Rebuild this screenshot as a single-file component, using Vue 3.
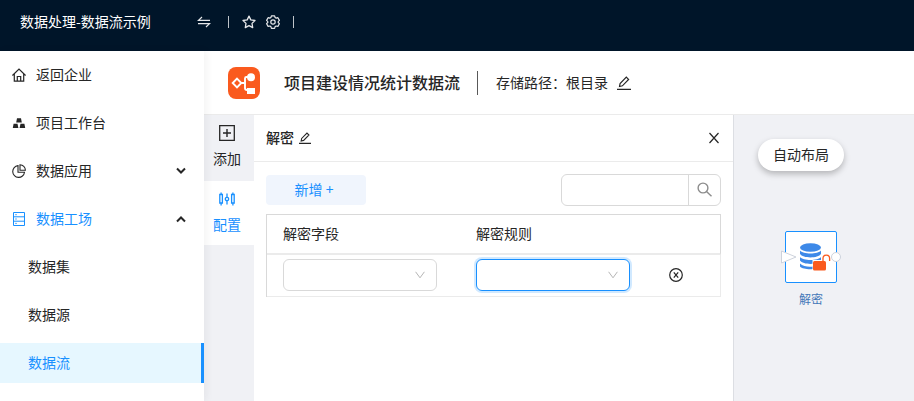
<script setup>
import { ref } from 'vue'

const menu = [
  { label: '返回企业', icon: 'home' },
  { label: '项目工作台', icon: 'bench' },
  { label: '数据应用', icon: 'pie', arrow: 'down' },
  { label: '数据工场', icon: 'server', arrow: 'up', open: true },
  { label: '数据集', child: true },
  { label: '数据源', child: true },
  { label: '数据流', child: true, active: true },
]
const keyword = ref('')
const field = ref('')
const rule = ref('')
</script>

<template>
  <div class="app">
    <header class="topbar">
      <span class="brand">数据处理-数据流示例</span>
      <button class="icon-btn swap" aria-label="切换">
        <svg width="14" height="14" viewBox="0 0 14 14" fill="none" stroke="currentColor" stroke-width="1.2">
          <path d="M13 5.3H1.5L5 2M1 8.7h11.5L9 12" />
        </svg>
      </button>
      <i class="bar"></i>
      <button class="icon-btn star" aria-label="收藏">
        <svg width="14" height="14" viewBox="0 0 14 14" fill="none" stroke="currentColor" stroke-width="1.3" stroke-linejoin="round">
          <path d="M7 1.1l1.800 3.800 4.200.6-3 2.900.7 4.200L7 10.600l-3.700 2 .7-4.200-3-2.900 4.200-.6z" />
        </svg>
      </button>
      <button class="icon-btn gear" aria-label="设置">
        <svg width="14" height="14" viewBox="0 0 14 14" fill="none" stroke="currentColor" stroke-width="1.2" stroke-linejoin="round">
          <path d="M5.400.8h3.200l.5 1.700 1.100.6 1.700-.4 1.500 2.700L12.200 6.600v.9l1.200 1.200-1.500 2.700-1.700-.4-1.100.6-.5 1.700H5.400l-.5-1.700-1.100-.6-1.700.4L.6 8.700l1.200-1.200v-.9L.6 5.400l1.500-2.700 1.700.4 1.100-.6z" />
          <circle cx="7" cy="7" r="2.200" />
        </svg>
      </button>
      <i class="bar"></i>
    </header>

    <div class="body">
      <nav class="side">
        <a
          v-for="m in menu"
          :key="m.label"
          href="#"
          class="item"
          :class="{ child: m.child, active: m.active, open: m.open }"
        >
          <svg v-if="m.icon === 'home'" class="ico" viewBox="0 0 14 14" fill="none" stroke="currentColor" stroke-width="1.200">
            <path d="M.4 7.500L7 1l6.600 6.500M2.300 6v7.200h9.400V6M5.300 13V8.500h3.400V13" />
          </svg>
          <svg v-else-if="m.icon === 'bench'" class="ico" viewBox="0 0 14 14" fill="currentColor">
            <path d="M5 2.300h4l.8 4.200H4.200zM1.600 7.700h3.900l.9 4.300H.8zM8.500 7.700h3.900l.8 4.300H7.600z" />
          </svg>
          <svg v-else-if="m.icon === 'pie'" class="ico" viewBox="0 0 14 14" fill="none" stroke="currentColor" stroke-width="1.100">
            <path d="M6 1.600a5.900 5.900 0 1 0 6.500 6.600H6zM8 .7v5.500h5.400A5.600 5.600 0 0 0 8 .7z" />
          </svg>
          <svg v-else-if="m.icon === 'server'" class="ico" viewBox="0 0 14 14" fill="none" stroke="currentColor">
            <path d="M1.500.5h11v13h-11zM1.500 4.800h11M1.500 9.200h11M3.300 2.700h1.400M3.300 7h1.400M3.300 11.400h1.400" />
          </svg>
          <span class="text">{{ m.label }}</span>
          <svg v-if="m.arrow" class="arrow" width="10" height="8" viewBox="0 0 10 8" fill="none" stroke="currentColor" stroke-width="2">
            <path :d="m.arrow === 'down' ? 'M1 1.500l4 4 4-4' : 'M1 6.500l4-4 4 4'" />
          </svg>
        </a>
      </nav>

      <main class="main">
        <div class="head">
          <svg class="logo" width="32" height="32" viewBox="0 0 32 32">
            <rect width="32" height="32" rx="8" fill="#fa5a1e" />
            <path d="M9 11.700l4.300 4.300L9 20.300 4.700 16zM13.500 16h3.500M22 10h-3.500a1.500 1.500 0 0 0-1.500 1.500v9.500a2 2 0 0 0 2 2h2" fill="none" stroke="#fff" stroke-width="1.900" />
            <circle cx="23" cy="10.200" r="4" fill="#fff" />
            <rect x="19" y="21" width="8" height="6" fill="#fff" />
          </svg>
          <h1>项目建设情况统计数据流</h1>
          <i class="split"></i>
          <span class="path">存储路径：根目录</span>
          <button class="icon-btn" aria-label="编辑路径">
            <svg width="14" height="14" viewBox="0 0 14 14" fill="none" stroke="currentColor" stroke-width="1.200">
              <path d="M0 13.400h14M2.500 10.500l.6-3L9.300 1.200l2.300 2.300-6.200 6.300z" />
            </svg>
          </button>
        </div>

        <div class="work">
          <div class="rail">
            <button class="tool">
              <svg width="16" height="16" viewBox="0 0 16 16" fill="none" stroke="currentColor">
                <path d="M.7.7h14.600v14.600H.7z" stroke-width="1.300" />
                <path d="M4 8h8M8 4v8" stroke-width="1.400" />
              </svg>
              <span>添加</span>
            </button>
            <button class="tool on">
              <svg width="16" height="16" viewBox="0 0 16 16" fill="none" stroke="currentColor" stroke-width="1.300">
                <path d="M.8 3.500h2.600v8.500H.8zM2.100 1.500v2M2.100 12v2.500M12.600 3.500h2.600v8.500h-2.600zM13.900 1.500v2M13.900 12v2.500M8 2.500v3.500M8 10v3.500" />
                <circle cx="8" cy="8" r="1.700" />
              </svg>
              <span>配置</span>
            </button>
          </div>

          <section class="panel">
            <div class="panel-head">
              <h2>解密</h2>
              <button class="icon-btn" aria-label="编辑名称">
                <svg width="12" height="12" viewBox="0 0 14 14" fill="none" stroke="currentColor" stroke-width="1.300">
                  <path d="M0 13.300h14M2.500 10.500l.6-3L9.300 1.200l2.300 2.300-6.200 6.300z" />
                </svg>
              </button>
              <button class="icon-btn close" aria-label="关闭">
                <svg width="12" height="12" viewBox="0 0 12 12" fill="none" stroke="currentColor" stroke-width="1.200">
                  <path d="M1.500 1l9 10M10.500 1l-9 10" />
                </svg>
              </button>
            </div>

            <div class="panel-body">
              <div class="actions">
                <button class="add">新增 +</button>
                <div class="search">
                  <input v-model="keyword" type="text" aria-label="搜索" />
                  <button aria-label="查询">
                    <svg width="16" height="16" viewBox="0 0 16 16" fill="none" stroke="currentColor" stroke-width="1.400">
                      <circle cx="6" cy="6" r="4.900" />
                      <path d="M9.500 9.500l5 4.800" />
                    </svg>
                  </button>
                </div>
              </div>

              <table>
                <thead>
                  <tr>
                    <th>解密字段</th>
                    <th>解密规则</th>
                    <th class="op"></th>
                  </tr>
                </thead>
                <tbody>
                  <tr>
                    <td>
                      <label class="pick">
                        <select v-model="field" aria-label="解密字段"><option value=""></option></select>
                        <svg width="10" height="8" viewBox="0 0 10 8" fill="none" stroke="currentColor"><path d="M.6.8L5 6.800 9.400.8" /></svg>
                      </label>
                    </td>
                    <td>
                      <label class="pick focus">
                        <select v-model="rule" aria-label="解密规则"><option value=""></option></select>
                        <svg width="10" height="8" viewBox="0 0 10 8" fill="none" stroke="currentColor"><path d="M.6.8L5 6.800 9.400.8" /></svg>
                      </label>
                    </td>
                    <td class="op">
                      <button class="icon-btn" aria-label="删除">
                        <svg width="14" height="14" viewBox="0 0 14 14" fill="none" stroke="currentColor" stroke-width="1.200">
                          <circle cx="7" cy="7" r="6.300" />
                          <path d="M4.800 4.400l4.400 5.200M9.200 4.400L4.800 9.600" />
                        </svg>
                      </button>
                    </td>
                  </tr>
                </tbody>
              </table>
            </div>
          </section>

          <section class="canvas">
            <button class="auto">自动布局</button>
            <div class="node">
              <svg width="60" height="52" viewBox="0 0 60 52">
                <rect x="4.500" y=".5" width="51" height="51" rx="1.500" fill="#fff" stroke="#1890ff" />
                <path d="M.5 20v12l14.500-6z" fill="#fff" stroke="#cdd2dc" />
                <circle cx="55" cy="26" r="4.500" fill="#fff" stroke="#cdd2dc" />
                <g fill="#3d89e8">
                  <ellipse cx="29.500" cy="16.500" rx="10.500" ry="4.300" />
                  <path d="M19 19.500c3 4 18 4 21 0v3.500c-3 4.500-18 4.500-21 0zM19 26c3 4 18 4 21 0v3.500c-3 4.500-18 4.500-21 0zM19 32.500c3 3.500 10 3.500 13 3v2.500c-4 .5-11 0-13-2.500z" />
                </g>
                <path d="M31.500 29h13v11.500h-13z" fill="#fff" />
                <rect x="32" y="30" width="13" height="9.500" rx="1.500" fill="#fa5a1e" />
                <path d="M42 30v-2.500a3.300 3.300 0 0 1 6.600 0v2.500" fill="none" stroke="#fa5a1e" stroke-width="1.300" />
              </svg>
              <span>解密</span>
            </div>
          </section>
        </div>
      </main>
    </div>
  </div>
</template>

<style>
body {
  margin: 0;
}
</style>

<style scoped>
* {
  box-sizing: border-box;
}
.app {
  display: flex;
  flex-direction: column;
  min-height: 100vh;
  font-family: "Noto Sans CJK SC", sans-serif;
  font-size: 14px;
  line-height: 22px;
  color: #262626;
  background: #fff;
}
button {
  font: inherit;
  color: inherit;
  border: 0;
  padding: 0;
  background: none;
  cursor: pointer;
}
svg {
  display: block;
  flex: none;
}
.brand,
.text,
.path,
h1,
h2 {
  padding-bottom: 2px;
}
.topbar {
  display: flex;
  align-items: center;
  height: 51px;
  padding: 0 20px 8px;
  background: #001529;
  color: #fff;
}
.brand {
  margin-right: 46px;
  font-size: 14px;
}
.bar {
  width: 1px;
  height: 12px;
  background: #bfc4ca;
}
.swap {
  margin-right: 17px;
}
.star {
  margin-left: 13px;
}
.gear {
  margin: 0 13px 0 10px;
}
.topbar .icon-btn {
  color: #e6e8ea;
}
.body {
  display: flex;
  flex: 1;
}
.side {
  display: flex;
  flex-direction: column;
  flex: none;
  gap: 8px;
  width: 204px;
  padding-top: 4px;
  box-shadow: 2px 0 8px rgba(29, 35, 41, 0.06);
  z-index: 1;
}
.item {
  display: flex;
  align-items: center;
  height: 40px;
  padding: 0 18px 0 12px;
  color: #262626;
  text-decoration: none;
}
.ico {
  width: 14px;
  height: 14px;
  margin-right: 10px;
}
.text {
  flex: 1;
}
.item.open {
  color: #1890ff;
}
.arrow {
  color: #262626;
}
.item.child {
  padding-left: 28px;
}
.item.active {
  color: #1890ff;
  background: #e6f7ff;
  border-right: 3px solid #1890ff;
}
.main {
  display: flex;
  flex-direction: column;
  flex: 1;
  min-width: 0;
}
.head {
  display: flex;
  align-items: center;
  height: 64px;
  padding: 0 24px;
  border-bottom: 1px solid #ebebeb;
}
h1 {
  margin: 0 17px 0 24px;
  font-size: 16px;
  font-weight: 500;
}
.split {
  width: 1px;
  height: 24px;
  margin-right: 18px;
  background: #595959;
}
.path {
  margin-right: 9px;
}
.work {
  display: flex;
  flex: 1;
}
.rail {
  display: flex;
  flex-direction: column;
  flex: none;
  width: 50px;
  background: #f0f1f5;
}
.tool {
  display: flex;
  flex-direction: column;
  align-items: center;
  gap: 6px;
  height: 66px;
  padding: 10px 4px 0 0;
}
.on {
  height: 64px;
  color: #1890ff;
  background: #fff;
}
.panel {
  flex: 0 0 480px;
  border-right: 1px solid #dcdee3;
}
.panel-head {
  display: flex;
  align-items: center;
  height: 47px;
  padding: 0 13px 0 12px;
  border-bottom: 1px solid #ebebeb;
}
h2 {
  margin: 0 5px 0 0;
  font-size: 14px;
  font-weight: 500;
}
.close {
  margin-left: auto;
}
.panel-body {
  padding: 12px;
}
.actions {
  display: flex;
  align-items: center;
  justify-content: space-between;
  margin-bottom: 8px;
}
.add {
  width: 100px;
  height: 30px;
  padding: 0 4px 2px 0;
  border-radius: 4px;
  color: #1890ff;
  background: #f0f5fd;
}
.search {
  display: flex;
  width: 160px;
  height: 32px;
  border: 1px solid #d9d9d9;
  border-radius: 6px;
}
.search input {
  flex: 1;
  min-width: 0;
  border: 0;
  padding: 0 10px;
  font: inherit;
  background: none;
  outline: none;
}
.search button {
  display: grid;
  place-items: center;
  width: 32px;
  border-left: 1px solid #d9d9d9;
  color: #8c8c8c;
}
table {
  width: 100%;
  table-layout: fixed;
  border-collapse: separate;
  border-spacing: 0;
  border-left: 1px solid #d9d9d9;
}
th {
  height: 41px;
  padding: 0 16px 2px;
  border-top: 1px solid #d9d9d9;
  border-bottom: 2px solid #ebebeb;
  font-weight: 400;
  text-align: left;
}
th.op {
  border-right: 1px solid #d9d9d9;
}
td {
  height: 42px;
  padding: 0 23px 2px 16px;
  border-bottom: 1px solid #ebebeb;
}
.op {
  width: 68px;
}
td.op {
  padding: 0 0 0 16px;
  border-right: 1px solid #ebebeb;
}
.pick {
  display: grid;
  align-items: center;
}
.pick select,
.pick svg {
  grid-area: 1 / 1;
}
.pick select {
  appearance: none;
  width: 100%;
  height: 32px;
  padding: 0 32px 0 11px;
  border: 1px solid #d9d9d9;
  border-radius: 6px;
  background: #fff;
  font: inherit;
  outline: none;
}
.pick svg {
  justify-self: end;
  margin-right: 12px;
  color: #b5b5b5;
  pointer-events: none;
}
.focus select {
  border-color: #1890ff;
  box-shadow: 0 0 0 2px rgba(24, 144, 255, 0.2);
}
.canvas {
  position: relative;
  flex: 1;
  padding: 24px;
  background: #f0f1f5;
}
.auto {
  height: 32px;
  padding: 0 15px 2px;
  border-radius: 16px;
  background: #fff;
  box-shadow: 0 3px 6px rgba(0, 0, 0, 0.25);
}
.node {
  position: absolute;
  left: 47px;
  top: 116px;
  display: flex;
  flex-direction: column;
  align-items: center;
  gap: 6px;
  font-size: 12px;
  line-height: 20px;
  color: #4377b8;
}
</style>
